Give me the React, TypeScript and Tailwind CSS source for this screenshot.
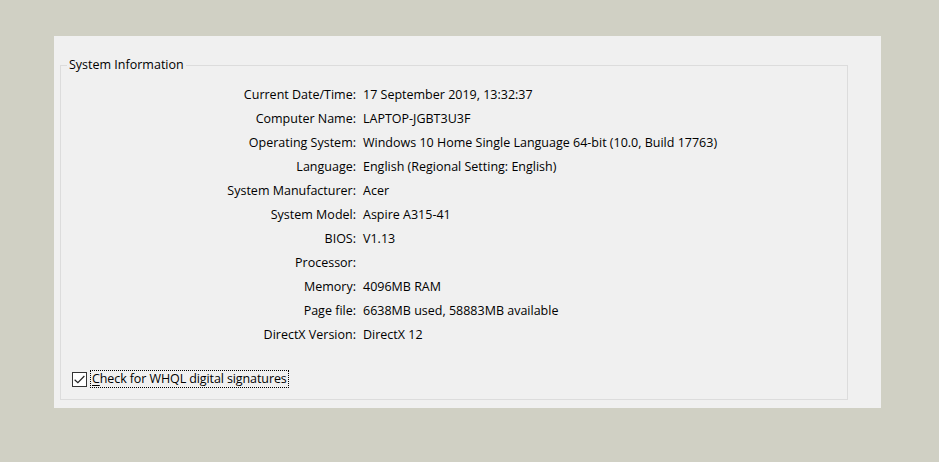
const rows: [string, string][] = [
  ["Current Date/Time:", "17 September 2019, 13:32:37"],
  ["Computer Name:", "LAPTOP-JGBT3U3F"],
  ["Operating System:", "Windows 10 Home Single Language 64-bit (10.0, Build 17763)"],
  ["Language:", "English (Regional Setting: English)"],
  ["System Manufacturer:", "Acer"],
  ["System Model:", "Aspire A315-41"],
  ["BIOS:", "V1.13"],
  ["Processor:", ""],
  ["Memory:", "4096MB RAM"],
  ["Page file:", "6638MB used, 58883MB available"],
  ["DirectX Version:", "DirectX 12"],
];

export default function App() {
  return (
    <div
      className="w-[939px] h-[462px] bg-[#d0d0c4] pt-[36px] pl-[54px] text-[12.5px] text-black"
      style={{ fontFamily: '"Open Sans", "Liberation Sans", sans-serif' }}
    >
      <div className="w-[827px] h-[372px] bg-[#f0f0f0] pt-[22px] pl-[6px] pr-[33px]">
        <fieldset className="border border-[#dcdcdc] h-[342px] px-0">
          <legend className="ml-[6px] px-[2px] leading-[14px] text-[#000]">System Information</legend>

          <div className="grid grid-cols-[295px_1fr] gap-x-[7px] mt-[11px]">
            {rows.map(([label, value]) => (
              <div key={label} className="contents">
                <div className="text-right h-[24px] leading-[24px] whitespace-nowrap">{label}</div>
                <div className="h-[24px] leading-[24px] whitespace-nowrap">{value}</div>
              </div>
            ))}
          </div>

          <div className="flex items-center mt-[23px] ml-[11px]">
            <span className="w-[15px] h-[15px] border border-[#333] bg-white flex items-center justify-center">
              <svg width="13" height="13" viewBox="0 0 12 12">
                <path d="M1.5 6.2 L4.5 9 L10.5 2.8" fill="none" stroke="#222" strokeWidth="1.1" />
              </svg>
            </span>
            <span className="ml-[3px] px-[1px] border border-dotted border-black leading-[16px] tracking-[-0.1px]">
              <span className="underline underline-offset-2">C</span>heck for WHQL digital signatures
            </span>
          </div>
        </fieldset>
      </div>
    </div>
  );
}
